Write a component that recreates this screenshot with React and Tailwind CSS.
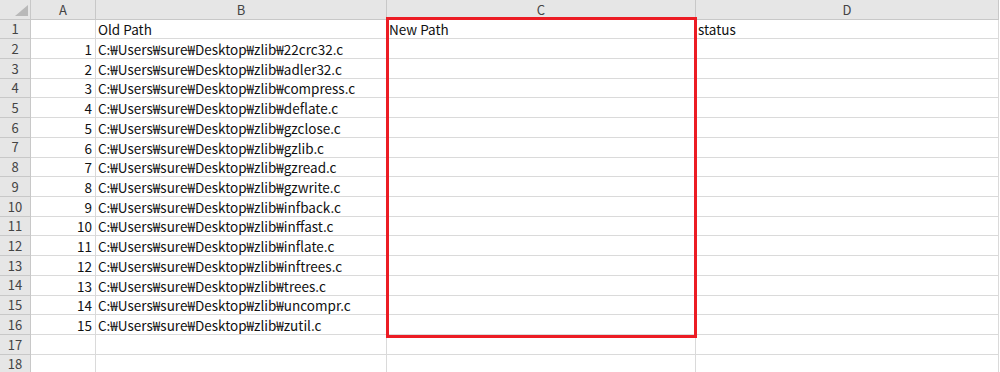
import React from 'react';

const files = [
  '22crc32.c', 'adler32.c', 'compress.c', 'deflate.c', 'gzclose.c', 'gzlib.c',
  'gzread.c', 'gzwrite.c', 'infback.c', 'inffast.c', 'inflate.c', 'inftrees.c',
  'trees.c', 'uncompr.c', 'zutil.c',
];

const font = { fontFamily: '"Noto Sans CJK KR", "Noto Sans", sans-serif' };

function HeaderCell({ children }) {
  return (
    <div className="flex items-center justify-center bg-[#e6e6e6] border-r border-b border-[#c8c8c8] text-[13px] text-[#444]">
      {children}
    </div>
  );
}

function RowHead({ n }) {
  return (
    <div className="flex items-center justify-center bg-[#e6e6e6] border-r border-b border-[#c8c8c8] text-[13px] text-[#444]">
      {n}
    </div>
  );
}

function Cell({ children, right }) {
  return (
    <div
      className={`flex items-center pt-[1px] border-r border-b border-[#dadada] bg-white text-[13.5px] text-[#111] whitespace-nowrap overflow-visible ${
        right ? 'justify-end pr-[3px]' : 'pl-[2px]'
      }`}
    >
      {children}
    </div>
  );
}

export default function App() {
  const rows = [];
  for (let i = 1; i <= 18; i++) {
    let a = '';
    let b = '';
    let c = '';
    let d = '';
    if (i === 1) {
      b = 'Old Path';
      c = 'New Path';
      d = 'status';
    } else if (i <= 16) {
      a = String(i - 1);
      b = `C:₩Users₩sure₩Desktop₩zlib₩${files[i - 2]}`;
    }
    rows.push(
      <React.Fragment key={i}>
        <RowHead n={i} />
        <Cell right>{a}</Cell>
        <Cell>{b}</Cell>
        <Cell>{c}</Cell>
        <Cell>{d}</Cell>
      </React.Fragment>
    );
  }

  return (
    <div className="relative w-[1000px] h-[372px] overflow-hidden bg-white" style={font}>
      <div className="grid grid-cols-[31px_65px_291px_309px_303px] grid-rows-[19.5px_repeat(18,19.72px)]">
        <div className="relative bg-[#e6e6e6] border-r border-b border-[#c8c8c8]">
          <div className="absolute left-[15px] top-[5px] w-0 h-0 border-l-[13px] border-l-transparent border-b-[11px] border-b-[#b9b9b9]" />
        </div>
        <HeaderCell>A</HeaderCell>
        <HeaderCell>B</HeaderCell>
        <HeaderCell>C</HeaderCell>
        <HeaderCell>D</HeaderCell>
        {rows}
      </div>
      <div className="absolute left-[386px] top-[17px] w-[311px] h-[321px] border-[3px] border-[#ec1c24] pointer-events-none" />
    </div>
  );
}
